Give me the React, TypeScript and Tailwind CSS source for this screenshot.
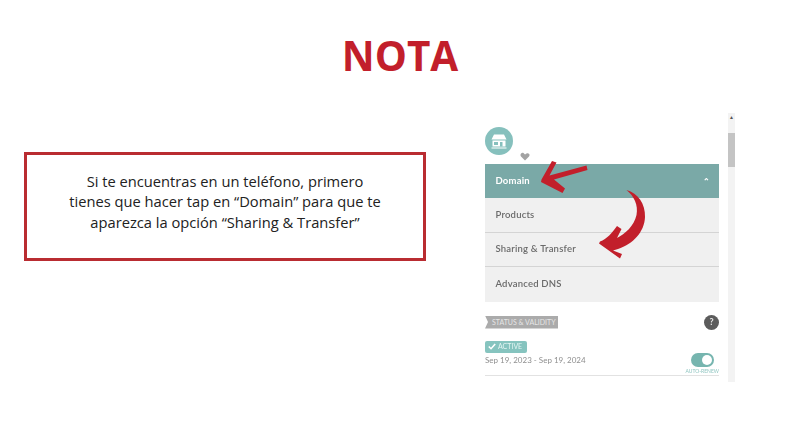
const rowText = "font-['Lato',sans-serif] text-[9.5px] font-semibold text-[#6a6a6a] tracking-[0.2px]";

function MenuRow({ label, last }: { label: string; last?: boolean }) {
  return (
    <div className={`h-[34.5px] flex items-center pl-[10.5px] bg-[#f0f0f0] border-[#d4d4d4] ${last ? "" : "border-b"} ${rowText}`}>
      {label}
    </div>
  );
}

function Arrows() {
  return (
    <svg
      className="absolute left-[45px] top-[42px] w-[125px] h-[110px] pointer-events-none"
      viewBox="530 155 125 110"
      fill="#c21f2b"
    >
      <path d="M586.5 165.5 L587.5 170 L554 179.5 L565 188.5 L562.5 193 L541 182 L541.5 179.5 L552 161 L556.5 162.5 L549.5 175.5 Z" />
      <path d="M626.5 190 C638 193 645.5 204 645 217 C644.5 232 633 244 618 249 L613 250.5 L622 254 L620 258.5 L599 243.5 L600 241.5 C607 239 612 233 617 226 L621.5 229 L617 238 C625 234 634 226 636.5 215 C638.5 205 634 196 626.5 190 Z" />
    </svg>
  );
}

function PhonePanel() {
  return (
    <div className="relative ml-[59px] w-[250px] h-[269px] flex">
      <div className="w-[234px] pt-[14px] font-['Lato',sans-serif] blur-[0.35px]">
        <div className="relative h-[37px]">
          <div className="w-[28px] h-[28px] rounded-full bg-[#86c0bd] flex items-center justify-center">
            <svg width="16" height="15" viewBox="0 0 16 15" fill="none">
              <path d="M3 0.5 H13 L15.5 5.5 H0.5 Z" fill="#fff" />
              <rect x="1.5" y="6.5" width="13" height="6" fill="#fff" />
              <rect x="3" y="8" width="4" height="3" fill="#86c0bd" />
              <rect x="9" y="8" width="2.5" height="4.5" fill="#86c0bd" />
              <rect x="0.5" y="13.5" width="15" height="1" fill="#fff" />
            </svg>
          </div>
          <svg className="absolute left-[35px] top-[25px]" width="10" height="9" viewBox="0 0 10 9" fill="#a3a3a3">
            <path d="M5 8.5 L1 4.5 C-0.5 2.5 1.5 0 3.5 1 L5 2.5 L6.5 1.5 C8.5 0.5 10.5 2.5 9 4.5 Z" />
          </svg>
        </div>
        <div className="h-[34px] flex items-center justify-between pl-[10.5px] pr-[9px] bg-[#7aa9a7] text-white text-[9.5px] font-bold tracking-[0.2px]">
          <span>Domain</span>
          <span className="text-[8px] leading-none">⌃</span>
        </div>
        <MenuRow label="Products" />
        <MenuRow label="Sharing & Transfer" />
        <MenuRow label="Advanced DNS" last />
        <div className="mt-[13px] flex items-center justify-between">
          <div className="h-[13px] w-[73px] bg-[#ababab] text-[#e6e6e6] text-[7px] flex items-center pl-[7px] whitespace-nowrap [clip-path:polygon(0_0,100%_0,100%_100%,0_100%,3px_50%)]">
            STATUS & VALIDITY
          </div>
          <div className="w-[15px] h-[15px] rounded-full bg-[#5c5c5c] text-[#e8e8e8] text-[9px] font-bold flex items-center justify-center">?</div>
        </div>
        <div className="mt-[11px] relative h-[35px] border-b border-[#e2e2e2]">
          <div className="h-[12px] w-[42px] rounded-[2px] bg-[#86c4bf] text-[#e4f5f3] text-[7px] flex items-center pl-[3px] gap-[2px]">
            <svg width="8" height="7" viewBox="0 0 8 7" fill="none" stroke="#fff" strokeWidth="1.6">
              <path d="M0.8 3.5 L3 5.7 L7.2 1" />
            </svg>
            ACTIVE
          </div>
          <div className="text-[8px] leading-[12px] text-[#8f8f8f] mt-[1px]">Sep 19, 2023 - Sep 19, 2024</div>
          <div className="absolute right-[5px] top-[12px] w-[23px] h-[14px] rounded-full bg-[#76b5af] flex items-center justify-end pr-[2px]">
            <div className="w-[10px] h-[10px] rounded-full bg-white" />
          </div>
          <div className="absolute right-0 top-[27px] text-[5px] leading-[7px] text-[#8fc5c0] whitespace-nowrap">AUTO-RENEW</div>
        </div>
      </div>
      <div className="ml-[9px] w-[7px] bg-[#f3f3f3] relative">
        <div className="absolute left-[1px] top-[2px] text-[5px] leading-none text-[#555]">▲</div>
        <div className="mt-[20px] h-[34px] bg-[#c4c4c4]" />
      </div>
      <Arrows />
    </div>
  );
}

export default function App() {
  return (
    <div className="w-[800px] h-[425px] bg-white font-['Open_Sans',sans-serif] overflow-hidden">
      <h1 className="pt-[29px] h-[113px] text-center text-[40.5px] leading-[54px] font-bold text-[#c21f2b]">NOTA</h1>
      <div className="flex items-start">
        <div className="ml-[24px] mt-[39px] w-[402px] h-[109px] pb-[10px] border-[3px] border-[#b92c31] flex items-center justify-center text-center text-[14.7px] leading-[20.5px] text-[#222]">
          <p>
            Si te encuentras en un teléfono, primero
            <br />
            tienes que hacer tap en “Domain” para que te
            <br />
            aparezca la opción “Sharing & Transfer”
          </p>
        </div>
        <PhonePanel />
      </div>
    </div>
  );
}
